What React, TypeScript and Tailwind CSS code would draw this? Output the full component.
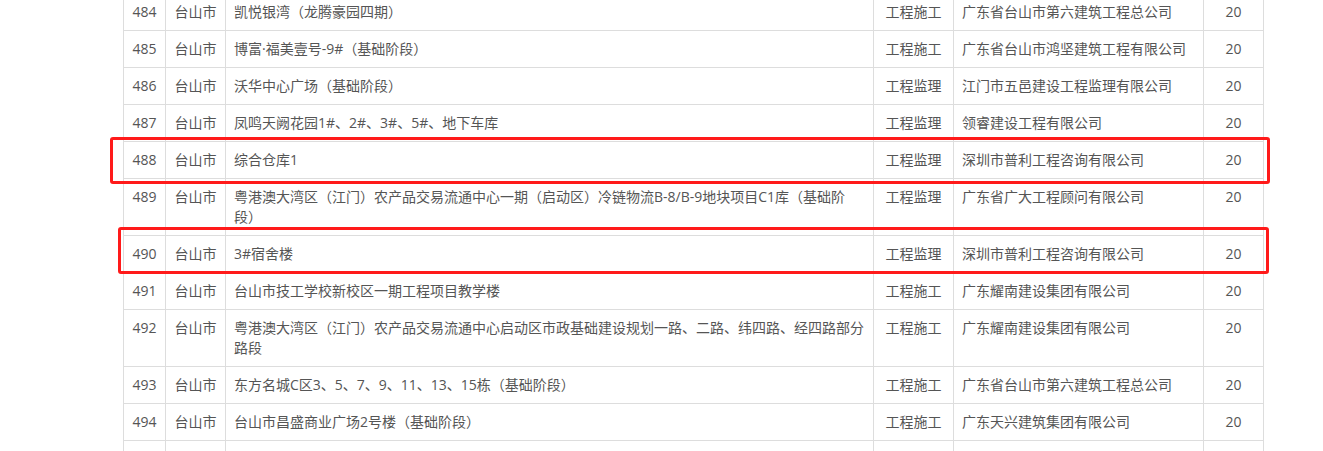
import React from "react";

type Row = {
  no: string;
  city: string;
  name: string;
  kind: string;
  company: string;
  score: string;
};

const rows: Row[] = [
  { no: "484", city: "台山市", name: "凯悦银湾（龙腾豪园四期）", kind: "工程施工", company: "广东省台山市第六建筑工程总公司", score: "20" },
  { no: "485", city: "台山市", name: "博富·福美壹号-9#（基础阶段）", kind: "工程施工", company: "广东省台山市鸿坚建筑工程有限公司", score: "20" },
  { no: "486", city: "台山市", name: "沃华中心广场（基础阶段）", kind: "工程监理", company: "江门市五邑建设工程监理有限公司", score: "20" },
  { no: "487", city: "台山市", name: "凤鸣天阙花园1#、2#、3#、5#、地下车库", kind: "工程监理", company: "领睿建设工程有限公司", score: "20" },
  { no: "488", city: "台山市", name: "综合仓库1", kind: "工程监理", company: "深圳市普利工程咨询有限公司", score: "20" },
  { no: "489", city: "台山市", name: "粤港澳大湾区（江门）农产品交易流通中心一期（启动区）冷链物流B-8/B-9地块项目C1库（基础阶段）", kind: "工程监理", company: "广东省广大工程顾问有限公司", score: "20" },
  { no: "490", city: "台山市", name: "3#宿舍楼", kind: "工程监理", company: "深圳市普利工程咨询有限公司", score: "20" },
  { no: "491", city: "台山市", name: "台山市技工学校新校区一期工程项目教学楼", kind: "工程施工", company: "广东耀南建设集团有限公司", score: "20" },
  { no: "492", city: "台山市", name: "粤港澳大湾区（江门）农产品交易流通中心启动区市政基础建设规划一路、二路、纬四路、经四路部分路段", kind: "工程施工", company: "广东耀南建设集团有限公司", score: "20" },
  { no: "493", city: "台山市", name: "东方名城C区3、5、7、9、11、13、15栋（基础阶段）", kind: "工程施工", company: "广东省台山市第六建筑工程总公司", score: "20" },
  { no: "494", city: "台山市", name: "台山市昌盛商业广场2号楼（基础阶段）", kind: "工程施工", company: "广东天兴建筑集团有限公司", score: "20" },
];

const cell = "border border-[#dddddd] px-2 py-2 leading-5 align-top";

export default function App() {
  return (
    <div
      className="relative h-[451px] w-[1323px] overflow-hidden bg-white text-[14px] text-[#555555]"
      style={{ fontFamily: '"Open Sans", "Noto Sans CJK SC", sans-serif' }}
    >
      <div className="-mt-[7px] pl-[123px]">
        <table className="w-[1140px] table-fixed border-collapse">
          <colgroup>
            <col className="w-[42px]" />
            <col className="w-[60px]" />
            <col className="w-[648px]" />
            <col className="w-[80px]" />
            <col className="w-[250px]" />
            <col className="w-[60px]" />
          </colgroup>
          <tbody>
            {rows.map((r) => (
              <tr key={r.no}>
                <td className={`${cell} text-center`}>{r.no}</td>
                <td className={`${cell} text-center`}>{r.city}</td>
                <td className={cell}>{r.name}</td>
                <td className={`${cell} text-center`}>{r.kind}</td>
                <td className={cell}>{r.company}</td>
                <td className={`${cell} text-center`}>{r.score}</td>
              </tr>
            ))}
            {/* next row, only its top edge shows */}
            <tr className="h-[37px]">
              <td className={cell} />
              <td className={cell} />
              <td className={cell} />
              <td className={cell} />
              <td className={cell} />
              <td className={cell} />
            </tr>
          </tbody>
        </table>
      </div>

      {/* annotation boxes */}
      <div className="absolute left-[110px] top-[137px] h-[47px] w-[1160px] rounded-[3px] border-[3px] border-[#ff1a1a]" />
      <div className="absolute left-[118px] top-[227px] h-[47px] w-[1151px] rounded-[3px] border-[3px] border-[#ff1a1a]" />
    </div>
  );
}
